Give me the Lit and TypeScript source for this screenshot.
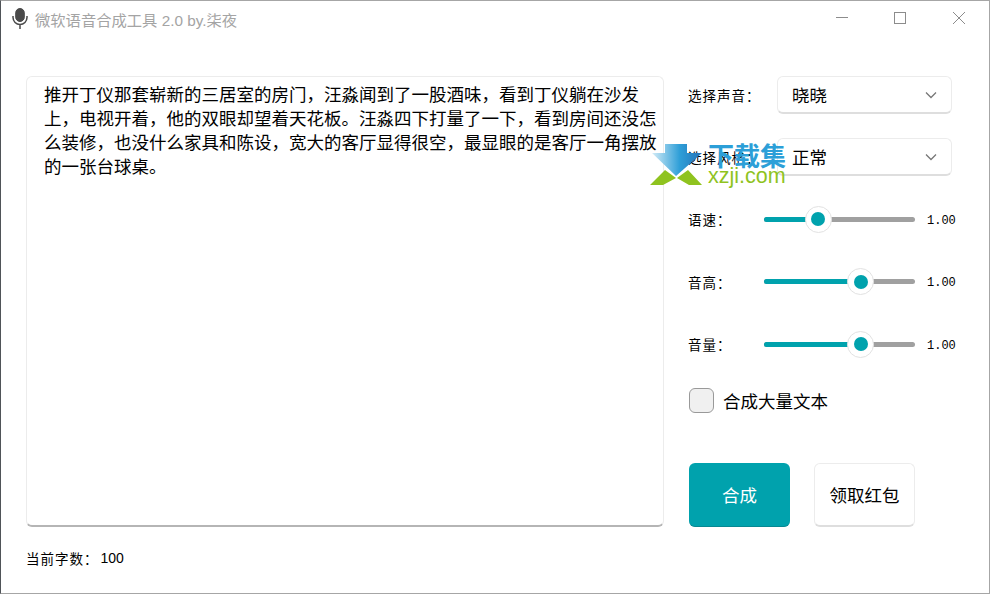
import { LitElement, html, css } from "lit";
import { customElement } from "lit/decorators.js";

const SLIDERS = [
  { label: "语速：", pct: 36 },
  { label: "音高：", pct: 64 },
  { label: "音量：", pct: 64 },
];
const TEXT =
  "推开丁仪那套崭新的三居室的房门，汪淼闻到了一股酒味，看到丁仪躺在沙发上，电视开着，他的双眼却望着天花板。汪淼四下打量了一下，看到房间还没怎么装修，也没什么家具和陈设，宽大的客厅显得很空，最显眼的是客厅一角摆放的一张台球桌。";

@customElement("app-root")
export class AppRoot extends LitElement {
  static styles = css`
    :host {
      display: block;
      width: 990px;
      height: 594px;
      position: relative;
      overflow: hidden;
      background: #fff;
      color: #000;
      font-family: "Noto Sans CJK SC", "Noto Sans", sans-serif;
    }
    .window {
      box-sizing: border-box;
      width: 990px;
      height: 594px;
      display: flex;
      flex-direction: column;
      border: 1px solid #a6a6a6;
      border-left-color: #4f5358;
    }
    .titlebar {
      box-sizing: border-box;
      height: 39px;
      display: flex;
      align-items: center;
      padding: 0 0 4px 10px;
      flex: none;
    }
    .mic { width: 18px; height: 22px; flex: none; }
    .title {
      margin-left: 6px;
      font-size: 15.3px;
      color: #a4a4a4;
      white-space: nowrap;
      font-family: "Liberation Sans", "Noto Sans CJK SC", sans-serif;
    }
    .controls {
      margin-left: auto;
      display: flex;
      align-items: center;
      gap: 47px;
      padding: 0 24px 1px 0;
    }
    .controls svg { width: 12px; height: 12px; display: block; }
    .controls svg:first-child { margin-right: -1px; }
    .body {
      flex: 1;
      display: flex;
      padding: 36px 0 0 25px;
      min-height: 0;
    }
    .left { width: 638px; flex: none; display: flex; flex-direction: column; }
    .editor {
      box-sizing: border-box;
      height: 451px;
      border: 1px solid #ececec;
      border-bottom: 2px solid #b5b5b5;
      border-radius: 6px;
      padding: 5px 4px 0 17px;
      font-size: 17.5px;
      line-height: 24px;
    }
    .count {
      margin-top: 22px;
      font-size: 13.5px;
      line-height: 18px;
      display: flex;
      align-items: center;
      letter-spacing: 1px;
    }
    .count .num {
      margin-left: 2px;
      font-size: 14px;
      letter-spacing: 0;
      font-family: "Liberation Sans", sans-serif;
    }
    .right {
      margin-left: 24px;
      width: 270px;
      flex: none;
      display: flex;
      flex-direction: column;
    }
    .field {
      display: flex;
      align-items: center;
      height: 38px;
      font-size: 13.5px;
      letter-spacing: 1px;
    }
    .field + .field { margin-top: 24px; }
    .field .label { width: 89px; flex: none; }
    .select {
      box-sizing: border-box;
      width: 175px;
      height: 38px;
      display: flex;
      align-items: center;
      justify-content: space-between;
      border: 1px solid #ececec;
      border-bottom: 2px solid #dedede;
      border-radius: 6px;
      padding: 0 14px 0 14px;
      font-size: 17.5px;
      letter-spacing: 0;
    }
    .select svg { width: 12px; height: 8px; }
    .sliders {
      margin-top: 29px;
      display: flex;
      flex-direction: column;
      gap: 34.5px;
    }
    .slider {
      height: 28px;
      display: flex;
      align-items: center;
      font-size: 13.5px;
    }
    .slider .label { width: 76px; flex: none; letter-spacing: 1px; }
    .track {
      position: relative;
      width: 151px;
      height: 5px;
      border-radius: 3px;
      background: #a0a0a0;
      flex: none;
    }
    .fill {
      position: absolute;
      left: 0;
      top: 0;
      bottom: 0;
      border-radius: 3px;
      background: #00a2ad;
    }
    .thumb {
      position: absolute;
      top: 50%;
      box-sizing: border-box;
      width: 27px;
      height: 27px;
      margin: -13.5px 0 0 -13.5px;
      border-radius: 50%;
      background: #fff;
      border: 1px solid #e2e2e2;
      display: flex;
      align-items: center;
      justify-content: center;
    }
    .thumb::after {
      content: "";
      width: 14px;
      height: 14px;
      border-radius: 50%;
      background: #00a2ad;
    }
    .value {
      margin: 3px 0 0 12px;
      font-size: 12px;
      font-family: "Liberation Mono", monospace;
    }
    .check {
      margin-top: 30px;
      display: flex;
      align-items: center;
      gap: 9px;
      font-size: 17.5px;
      height: 25px;
      padding-left: 1px;
    }
    .box {
      box-sizing: border-box;
      width: 25px;
      height: 25px;
      background: #f0f0f0;
      border: 1px solid #999;
      border-radius: 6px;
    }
    .actions {
      margin-top: 50px;
      padding-left: 1px;
      display: flex;
      gap: 24px;
    }
    .btn {
      box-sizing: border-box;
      width: 101px;
      height: 64px;
      border-radius: 6px;
      display: flex;
      align-items: center;
      justify-content: center;
      font-size: 17.5px;
    }
    .btn.primary {
      background: #00a2ad;
      color: #fff;
      border-bottom: 1px solid #078892;
    }
    .btn.plain {
      background: #fff;
      border: 1px solid #ececec;
      border-bottom: 2px solid #dedede;
    }
    .wm {
      position: absolute;
      left: 649px;
      top: 143px;
      width: 140px;
      height: 44px;
      pointer-events: none;
    }
    .wm svg { position: absolute; left: 0; top: 0; width: 54px; height: 44px; }
    .wm-cn {
      position: absolute;
      left: 59px;
      top: -1px;
      font-size: 26px;
      line-height: 26px;
      font-weight: 700;
      color: #2c9fd8;
      white-space: nowrap;
    }
    .wm-en {
      position: absolute;
      left: 59px;
      top: 23px;
      font-size: 21.5px;
      line-height: 20px;
      color: #8fc31f;
      white-space: nowrap;
      font-family: "Liberation Sans", sans-serif;
    }
  `;

  render() {
    return html`
      <div class="window">
        <div class="titlebar">
          <svg class="mic" viewBox="0 0 18 22" fill="none" stroke="#4a4a4a">
            <rect x="4.7" y="0.5" width="8.6" height="13" rx="4.3" fill="#4a4a4a" />
            <path d="M2 8v1.5a7 7 0 0 0 14 0V8M9 16.5v4.5" stroke-width="1.5" />
          </svg>
          <span class="title">微软语音合成工具 2.0 by.柒夜</span>
          <div class="controls">
            <svg viewBox="0 0 12 12"><path d="M0 5.5h12" stroke="#8c8c8c" fill="none" /></svg>
            <svg viewBox="0 0 12 12"><rect x=".5" y=".5" width="11" height="11" stroke="#8c8c8c" fill="none" /></svg>
            <svg viewBox="0 0 12 12"><path d="M0 0l12 12M12 0L0 12" stroke="#8c8c8c" fill="none" /></svg>
          </div>
        </div>
        <div class="body">
          <div class="left">
            <div class="editor">${TEXT}</div>
            <div class="count">当前字数：<span class="num">100</span></div>
          </div>
          <div class="right">
            ${[["选择声音：", "晓晓"], ["选择风格：", "正常"]].map(
              ([l, v]) => html`
                <div class="field">
                  <span class="label">${l}</span>
                  <div class="select">
                    <span>${v}</span>
                    <svg viewBox="0 0 12 8"><path d="M1 1.5l5 5 5-5" fill="none" stroke="#777" stroke-width="1.3" /></svg>
                  </div>
                </div>
              `
            )}
            <div class="sliders">
              ${SLIDERS.map(
                (s) => html`
                  <div class="slider">
                    <span class="label">${s.label}</span>
                    <div class="track">
                      <div class="fill" style="width:${s.pct}%"></div>
                      <div class="thumb" style="left:${s.pct}%"></div>
                    </div>
                    <span class="value">1.00</span>
                  </div>
                `
              )}
            </div>
            <div class="check"><div class="box"></div><span>合成大量文本</span></div>
            <div class="actions">
              <div class="btn primary">合成</div>
              <div class="btn plain">领取红包</div>
            </div>
          </div>
        </div>
      </div>
      <div class="wm">
        <svg viewBox="0 0 54 44">
          <defs>
            <linearGradient id="wa" x1="0" y1="0" x2="1" y2="0">
              <stop offset="0" stop-color="#d4ecf7" />
              <stop offset="0.55" stop-color="#2f9fd8" />
              <stop offset="1" stop-color="#2472b8" />
            </linearGradient>
          </defs>
          <path d="M16 1h22v9h15L27 33 3 10h13z" fill="url(#wa)" />
          <path d="M1 42l15-15 11 8-13 7zM28 35l11-8 14 15H40z" fill="#8fc31f" />
        </svg>
        <span class="wm-cn">下载集</span>
        <span class="wm-en">xzji.com</span>
      </div>
    `;
  }
}
